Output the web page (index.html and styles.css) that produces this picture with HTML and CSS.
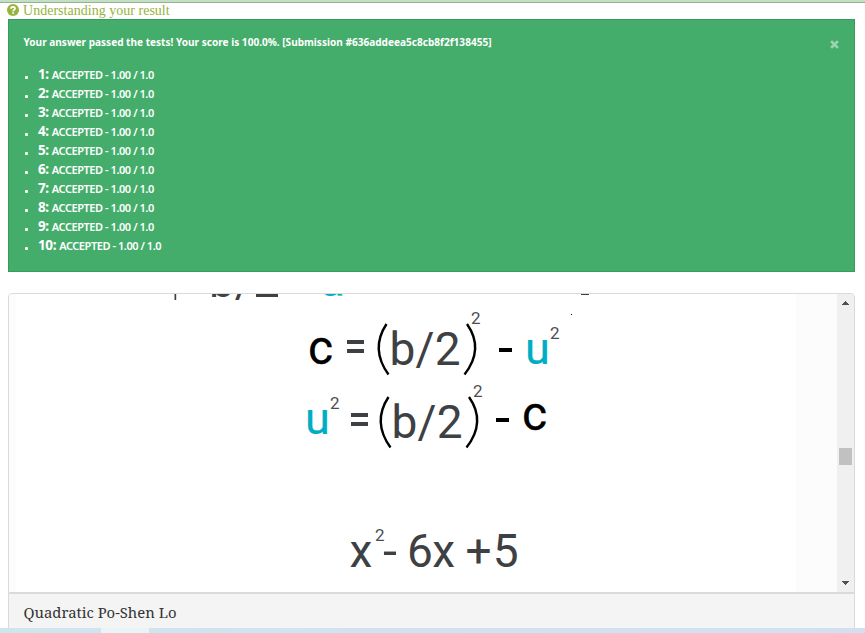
FILE: index.html
```html
<!DOCTYPE html>
<html lang="en">
<head>
<meta charset="utf-8">
<title>Submission result</title>
<link rel="stylesheet" href="styles.css">
</head>
<body>
<div class="page">
  <div class="topline"></div>
  <a class="help">
    <svg class="help-icon" viewBox="0 0 12 12"><circle cx="6" cy="6" r="6"/><path d="M4 4.7C4 2.2 8 2.2 8 4.6C8 6 6.100 5.900 6.100 7.300M6.100 8.300V9.800"/></svg>
    <span class="help-text">Understanding your result</span>
  </a>
  <section class="alert">
    <div class="alert-head">
      <svg class="summary" width="480" height="18"><text x="0.500" y="11" textLength="468" lengthAdjust="spacingAndGlyphs">Your answer passed the tests! Your score is 100.0%. [Submission #636addeea5c8cb8f2f138455]</text></svg>
      <svg class="close" viewBox="0 0 8 8"><path d="M1 1L7 7M7 1L1 7"/></svg>
    </div>
    <ul class="tests">
      <li><b>1:</b> <span>ACCEPTED - 1.00 / 1.0</span></li>
      <li><b>2:</b> <span>ACCEPTED - 1.00 / 1.0</span></li>
      <li><b>3:</b> <span>ACCEPTED - 1.00 / 1.0</span></li>
      <li><b>4:</b> <span>ACCEPTED - 1.00 / 1.0</span></li>
      <li><b>5:</b> <span>ACCEPTED - 1.00 / 1.0</span></li>
      <li><b>6:</b> <span>ACCEPTED - 1.00 / 1.0</span></li>
      <li><b>7:</b> <span>ACCEPTED - 1.00 / 1.0</span></li>
      <li><b>8:</b> <span>ACCEPTED - 1.00 / 1.0</span></li>
      <li><b>9:</b> <span>ACCEPTED - 1.00 / 1.0</span></li>
      <li><b>10:</b> <span>ACCEPTED - 1.00 / 1.0</span></li>
    </ul>
  </section>
  <section class="viewer">
    <div class="gutter-left"></div>
    <svg class="sheet" viewBox="16 294 780 298">
      <g class="ink">
        <text x="209" y="297.4">b/</text>
        <path d="M174.500 294h1.700v6h-1.700zM256 294h22v3h-22zM581 294h8v1h-8z"/>
        <text x="389.500" y="365" textLength="71">b/2</text>
        <text x="391.500" y="438" textLength="71">b/2</text>
        <path d="M347 340h17v4h-17zM347 349h17v4h-17zM351 413h17v4h-17zM351 422h17v4h-17z"/>
        <text x="349.500" y="567">x</text>
        <text x="383" y="567" textLength="14" lengthAdjust="spacingAndGlyphs">-</text>
        <text x="407" y="567" textLength="48">6x</text>
        <text x="465.500" y="567" textLength="53">+5</text>
      </g>
      <g class="small">
        <text x="471" y="324">2</text>
        <text x="550" y="339">2</text>
        <text x="330" y="409">2</text>
        <text x="473" y="397">2</text>
        <text x="375" y="541">2</text>
      </g>
      <g class="teal">
        <text x="320" y="296.3">a</text>
        <text x="525" y="363.5">u</text>
        <text x="305" y="433.5">u</text>
      </g>
      <g class="black">
        <text x="308" y="364">c</text>
        <text x="522" y="430">c</text>
        <path d="M499 348h13v4h-13zM496 418h13v4h-13zM571 314h1v1h-1z"/>
        <path class="paren" d="M386.500 324Q370 349 388.500 374.500M467 324Q484.500 349 464.500 374.500M388.500 397Q372 422 390.500 447.500M469 397Q486.500 422 466.500 447.500"/>
      </g>
    </svg>
    <div class="gutter-right"></div>
    <div class="scrollbar">
      <svg class="arrow" viewBox="0 0 7 4"><path d="M3 0h1v1h1v1h1v1h1v1H0V3h1V2h1V1h1z"/></svg>
      <div class="thumb"></div>
      <svg class="arrow down" viewBox="0 0 7 4"><path d="M3 0h1v1h1v1h1v1h1v1H0V3h1V2h1V1h1z"/></svg>
    </div>
  </section>
  <footer class="caption"><svg width="170" height="28"><text x="0.500" y="19" textLength="153" lengthAdjust="spacingAndGlyphs">Quadratic Po-Shen Lo</text></svg></footer>
  <div class="taskbar"><i></i></div>
</div>
</body>
</html>
```
FILE: styles.css
```css
* { box-sizing: border-box; }
body { margin: 0; background: #fff; overflow: hidden; }
.page { display: flex; flex-direction: column; width: 865px; height: 633px; }
.topline { height: 3px; flex: none; background: #c5dfc3; border-bottom: 1px solid #94b396; }
.help { display: flex; gap: 4px; height: 16px; flex: none; padding: 1px 0 0 7px; color: #96b43b; }
.help-icon { width: 12px; height: 12px; fill: #96b43b; }
.help-icon path { fill: none; stroke: #fff; stroke-width: 1.8; }
.help-text { font: 14px/15px "Liberation Serif", serif; letter-spacing: .02px; white-space: nowrap; margin-top: -1px; }
.alert { flex: none; height: 253px; margin: 0 10px 0 8px; padding: 15px 15px 0 14px; background: #45ad6b; border: 1px solid #399b59; color: #fff; font-family: "Noto Sans", "Open Sans", sans-serif; }
.alert-head { display: flex; justify-content: space-between; height: 30px; }
.summary { fill: #fff; font-size: 10.8px; font-weight: 700; }
.close { width: 9px; height: 9px; margin: 5px 0 0 0; fill: none; stroke: #9bd5ae; stroke-width: 2.5; }
.tests { margin: 0; padding: 0 0 0 15px; list-style: none; }
.tests li { display: flex; align-items: baseline; height: 19px; line-height: 19px; gap: 3px; white-space: nowrap; }
.tests li::before { content: ""; width: 3px; height: 3px; margin: 0 7px 0 -13px; border-radius: 1px; background: #fff; }
.tests b { font-size: 13.5px; letter-spacing: -.35px; }
.tests span { font-size: 11px; font-weight: 600; letter-spacing: -.44px; }
.viewer { display: flex; flex: none; width: 847px; height: 300px; margin: 21px 0 0 8px; border: 1px solid #dadada; border-radius: 4px 4px 0 0; overflow: hidden; }
.gutter-left { width: 7px; background: #fcfcfc; }
.sheet { width: 780px; height: 298px; font-family: Roboto, sans-serif; font-size: 46px; }
.ink { fill: #3d4144; }
.small { fill: #4b4f52; font-size: 17px; }
.teal { fill: #00adc2; stroke: #00adc2; stroke-width: .2; font-size: 45px; }
.black { fill: #000; }
.black text { font-size: 48px; stroke: #000; stroke-width: .3; }
.paren { fill: none; stroke: #000; stroke-width: 2.4; }
.gutter-right { width: 41px; background: #fcfcfc; }
.scrollbar { display: flex; flex-direction: column; align-items: center; width: 17px; padding: 7px 0; background: #f0f0f0; }
.arrow { width: 7px; height: 4px; flex: none; fill: #505050; }
.down { transform: rotate(180deg); margin-top: auto; }
.thumb { width: 13px; height: 17px; margin-top: 143px; background: #c1c1c1; }
.caption { flex: none; width: 847px; height: 35px; margin-left: 8px; padding: 5px 0 0 14px; background: #f4f4f4; border: 1px solid #dadada; border-width: 1px 1px 0; fill: #333; font: 15px "Noto Serif", "Liberation Serif", serif; }
.taskbar { height: 5px; flex: none; padding-left: 101px; background: linear-gradient(90deg, #cce6ee, #d2e0ee); }
.taskbar i { display: block; width: 48px; height: 5px; background: #e8f4f8; }
```
